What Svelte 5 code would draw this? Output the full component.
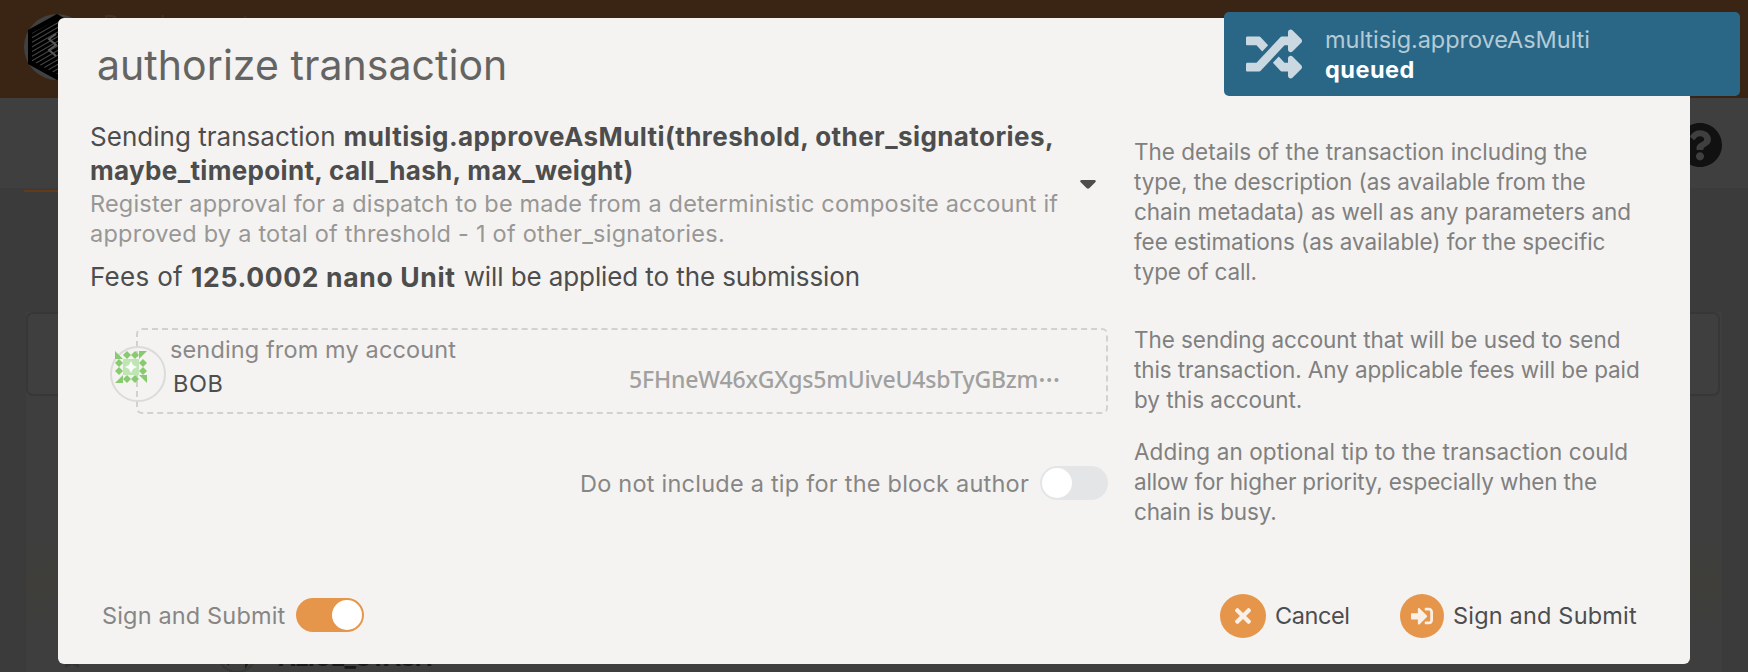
<script>
  let tipIncluded = $state(false);
  let signAndSubmit = $state(true);

  const help = [
    [
      ['The details of the transaction including the', 0],
      ['type, the description (as available from the', -0.06],
      ['chain metadata) as well as any parameters and', -0.06],
      ['fee estimations (as available) for the specific', -0.07],
      ['type of call.', -0.15]
    ],
    [
      ['The sending account that will be used to send', -0.06],
      ['this transaction. Any applicable fees will be paid', -0.11],
      ['by this account.', -0.04]
    ],
    [
      ['Adding an optional tip to the transaction could', 0.1],
      ['allow for higher priority, especially when the', -0.16],
      ['chain is busy.', -0.15]
    ]
  ];

  const diamonds = [[12, 4], [20, 4], [4, 12], [4, 20], [28, 12], [28, 20], [12, 28], [20, 28]];
</script>

<div class="page">
  <header class="topbar">
    <svg class="logo" viewBox="0 0 66 66">
      <defs>
        <pattern id="hatch" width="8" height="4" patternUnits="userSpaceOnUse" patternTransform="rotate(-30)">
          <rect width="8" height="1" fill="#4a4a4a" />
        </pattern>
      </defs>
      <circle cx="33" cy="33" r="33" fill="#414141" />
      <path d="M33 0 62 16V50L33 66 4 50V16Z" fill="#000" />
      <path d="M33 6 58 19V47L33 60 8 47V19Z" fill="url(#hatch)" />
      <path d="M32 20 25 25 32 31 25 36 32 42" fill="none" stroke="#5a5a5a" stroke-width="2" />
    </svg>
    <span class="chain">Development</span>
  </header>
  <nav class="tabs">
    <svg class="question" viewBox="8 8 496 496"><path d="M504 256c0 136.997-111.043 248-248 248S8 392.997 8 256C8 119.083 119.043 8 256 8s248 111.083 248 248zM262.655 90c-54.497 0-89.255 22.957-116.549 63.758-3.536 5.286-2.353 12.415 2.715 16.258l34.699 26.31c5.205 3.947 12.621 3.008 16.665-2.122 17.864-22.658 30.113-35.797 57.303-35.797 20.429 0 45.698 13.148 45.698 32.958 0 14.976-12.363 22.667-32.534 33.976C247.128 238.528 216 254.941 216 296v4c0 6.627 5.373 12 12 12h56c6.627 0 12-5.373 12-12v-1.333c0-28.462 83.186-29.647 83.186-106.667 0-58.002-60.165-102-116.531-102zM256 338c-25.365 0-46 20.635-46 46 0 25.364 20.635 46 46 46s46-20.636 46-46c0-25.365-20.635-46-46-46z" /></svg>
  </nav>
  <div class="underline"></div>
  <section class="panel">
    <div class="filter"></div>
    <div class="tint"></div>
    <div class="row">
      <svg class="mark" viewBox="0 0 14 18"><path d="M0 0H14V18L7 14.500 0 18Z" /></svg>
      <svg class="avatar" viewBox="0 0 40 40">
        <circle cx="20" cy="20" r="19" fill="none" stroke="#353535" stroke-width="2" />
        <path d="M5 26H12V33ZM28 26H35L28 36Z" fill="#10260c" />
      </svg>
      <b>ALICE_STASH</b>
    </div>
  </section>
</div>

<main class="modal">
  <h1>authorize transaction</h1>
  <div class="grid">
    <div class="left">
      <div class="call">
        <div class="line"><span style:letter-spacing="0.02px">Sending transaction</span><b style:letter-spacing="0.42px">multisig.approveAsMulti(threshold, other_signatories,</b></div>
        <div class="line"><b style:letter-spacing="0.34px">maybe_timepoint, call_hash, max_weight)</b></div>
        <div class="desc">Register approval for a dispatch to be made from a deterministic composite account if</div>
        <div class="desc">approved by a total of threshold - 1 of other_signatories.</div>
        <svg class="caret" viewBox="0 0 16 9"><path d="M1.500 0H14.500Q17 .5 15 2.500L9.500 8Q8 9.500 6.500 8L1 2.500Q-1 .5 1.500 0Z" /></svg>
      </div>
      <div class="line fees"><span style:letter-spacing="0.3px">Fees of</span><b class="fee">125.0002 nano Unit</b><span style:letter-spacing="-0.1px">will be applied to the submission</span></div>

      <div class="account">
        <svg class="ident" viewBox="0 0 56 56">
          <circle cx="28" cy="28" r="27" fill="none" stroke="#dbdbda" stroke-width="2" />
          <g transform="translate(5 5)" fill="#87ca70">
            <path d="M0 0V8H8ZM24 0H32L24 8ZM0 32 8 24V32ZM24 24H32V32Z" />
            {#each diamonds as [x, y]}
              <path d="M{x} {y - 4}L{x + 4} {y}L{x} {y + 4}L{x - 4} {y}Z" />
            {/each}
            <rect x="8" y="8" width="16" height="16" fill="#c0e5b5" />
            <path d="M16 10 18 14 22 16 18 18 16 22 14 18 10 16 14 14Z" fill="#fafdf9" />
          </g>
        </svg>
        <div class="who">
          <span class="label">sending from my account</span>
          <span class="name">BOB</span>
        </div>
        <div class="addr"><span>5FHneW46xGXgs5mUiveU4sbTyGBzm</span><span class="dots">…</span></div>
      </div>

      <div class="tip">
        <span>Do not include a tip for the block author</span>
        <button class="toggle" class:on={tipIncluded} aria-label="Tip" onclick={() => (tipIncluded = !tipIncluded)}></button>
      </div>
    </div>
    <aside>
      {#each help as block}
        <div class="block">
          {#each block as [text, spacing]}
            <div style:letter-spacing="{spacing}px">{text}</div>
          {/each}
        </div>
      {/each}
    </aside>
  </div>
  <footer>
    <span class="mode">Sign and Submit</span>
    <button class="toggle" class:on={signAndSubmit} aria-label="Sign" onclick={() => (signAndSubmit = !signAndSubmit)}></button>
    <button class="action cancel">
      <span class="disc wide"><svg width="16" height="16" viewBox="0 80 352 352"><path d="M242.720 256l100.070-100.070c12.280-12.280 12.280-32.190 0-44.480l-22.240-22.240c-12.280-12.280-32.190-12.280-44.480 0L176 189.280 75.930 89.210c-12.280-12.280-32.190-12.280-44.480 0L9.210 111.450c-12.280 12.280-12.280 32.190 0 44.480L109.280 256 9.210 356.070c-12.280 12.280-12.280 32.190 0 44.480l22.240 22.240c12.280 12.280 32.200 12.280 44.480 0L176 322.720l100.070 100.070c12.280 12.280 32.200 12.280 44.480 0l22.240-22.240c12.280-12.280 12.280-32.190 0-44.480L242.720 256z" /></svg></span>
      <span class="caption" style:letter-spacing="-0.4px">Cancel</span>
    </button>
    <button class="action submit">
      <span class="disc"><svg width="22" height="22" viewBox="0 0 512 512"><path d="M416 448h-84c-6.600 0-12-5.400-12-12v-40c0-6.600 5.400-12 12-12h84c17.700 0 32-14.300 32-32V160c0-17.700-14.300-32-32-32h-84c-6.600 0-12-5.400-12-12V76c0-6.600 5.400-12 12-12h84c53 0 96 43 96 96v192c0 53-43 96-96 96zm-47-201L201 79c-15-15-41-4.500-41 17v96H24c-13.300 0-24 10.700-24 24v96c0 13.300 10.700 24 24 24h136v96c0 21.500 26 32 41 17l168-168c9.300-9.400 9.300-24.600 0-34z" /></svg></span>
      <span class="caption">Sign and Submit</span>
    </button>
  </footer>
</main>

<div class="toast">
  <svg width="56" height="56" viewBox="0 0 512 512"><path d="M504.971 359.029c9.373 9.373 9.373 24.569 0 33.941l-80 79.984c-15.010 15.010-40.971 4.490-40.971-16.971V416h-58.785a12.004 12.004 0 0 1-8.773-3.812l-70.556-75.596 53.333-57.143L352 336h32v-39.981c0-21.438 25.943-31.998 40.971-16.971l80 79.981zM12 176h84l52.781 56.551 53.333-57.143-70.556-75.596A11.999 11.999 0 0 0 122.785 96H12c-6.627 0-12 5.373-12 12v56c0 6.627 5.373 12 12 12zm372 0v39.984c0 21.460 25.961 31.980 40.971 16.971l80-79.984c9.373-9.373 9.373-24.569 0-33.941l-80-79.981C409.943 24.021 384 34.582 384 56.019V96h-58.785a12.004 12.004 0 0 0-8.773 3.812L96 336H12c-6.627 0-12 5.373-12 12v56c0 6.627 5.373 12 12 12h110.785c3.326 0 6.503-1.381 8.773-3.812L352 176h32z" /></svg>
  <div class="message">
    <div class="method">multisig.approveAsMulti</div>
    <div class="status">queued</div>
  </div>
</div>

<style>
  :global(body) { margin: 0; overflow: hidden; background: #3b3b3b; }
  .page, .modal, .toast { font-family: Inter, "Noto Sans CJK JP", sans-serif; box-sizing: border-box; }
  button { font: inherit; color: inherit; border: 0; padding: 0; background: none; }
  svg { display: block; flex: none; }
  b { font-weight: 700; }

  .page { height: 672px; overflow: hidden; background: #3b3b3b; display: flex; flex-direction: column; }
  .topbar { height: 98px; flex: none; background: #3a2413; padding: 14px 24px 0; box-sizing: border-box; display: flex; gap: 13px; }
  .logo { width: 66px; height: 66px; }
  .chain { color: #44311f; font-size: 23.500px; line-height: 20px; }
  .tabs { height: 90px; flex: none; background: #3f3f3f; display: flex; align-items: center; justify-content: flex-end; padding: 4px 26px 0 0; box-sizing: border-box; }
  .question { width: 44px; height: 44px; fill: #111; }
  .underline { width: 200px; height: 2px; flex: none; margin: 2px 0 0 24px; background: #633b19; }
  .panel { margin: 120px 26px 0; flex: 1; background: #3e3e3e; display: flex; flex-direction: column; }
  .filter { height: 84px; flex: none; width: 1694px; box-sizing: border-box; border: 2px solid #373737; border-radius: 7px; background: #3f3f3f; }
  .tint { height: 77px; flex: none; margin-top: 147px; background: linear-gradient(#3e3e3d, #3f3e3b 50%, #3e3e3d); }
  .row { display: flex; align-items: flex-end; margin-top: 14px; height: 39px; padding-left: 39px; color: #181818; font-size: 24px; line-height: 30px; }
  .mark { width: 14px; height: 18px; fill: #343434; margin-bottom: 5px; }
  .avatar { width: 40px; height: 40px; margin-left: 138px; }
  .row b { margin-left: 21px; letter-spacing: -0.800px; }

  .modal { position: absolute; left: 58px; top: 18px; width: 1632px; height: 646px; border-radius: 6px; background: #f4f3f1; padding: 22px 0 26px 32px; display: flex; flex-direction: column; color: #4d4d4d; }
  h1 { margin: 0; padding-left: 7px; font-size: 41px; line-height: 50px; font-weight: 400; letter-spacing: 0.050px; color: #646463; }
  .grid { margin-top: 30px; display: grid; grid-template-columns: 1018px 1fr; column-gap: 26px; }
  .line { display: flex; gap: 8px; font-size: 26px; line-height: 34px; white-space: nowrap; }
  .call { position: relative; padding-bottom: 1px; }
  .desc { font-size: 23.500px; line-height: 30px; letter-spacing: 0.190px; color: #989796; white-space: nowrap; }
  .line + .desc { padding-top: 1px; }
  .desc + .desc { letter-spacing: 0.240px; }
  .caret { position: absolute; width: 16px; height: 9px; left: 990px; top: 60px; fill: #4d4d4d; }
  .fees { margin-top: 10px; }
  .fee { letter-spacing: 0.660px; font-size: 26.500px; }
  .account { position: relative; margin: 34px 0 0 46px; height: 86px; box-sizing: border-box; border: 2px dashed #d2d1d0; border-radius: 6px; display: flex; justify-content: space-between; padding: 0 46px 0 32px; font-size: 23.500px; white-space: nowrap; }
  .ident { position: absolute; width: 56px; height: 56px; left: -28px; top: 16px; }
  .who { display: flex; flex-direction: column; padding-top: 5px; }
  .label { line-height: 30px; letter-spacing: 0.130px; color: #8a8988; }
  .name { line-height: 38px; padding-left: 3px; letter-spacing: 0.600px; }
  .addr { display: flex; padding-top: 33px; line-height: 32px; color: #a0a09f; font-family: "Noto Sans", sans-serif; font-size: 23px; font-weight: 500; letter-spacing: -0.200px; }
  .dots { font-size: 27px; line-height: 17px; letter-spacing: 0; }
  .tip { margin-top: 52px; display: flex; align-items: center; justify-content: flex-end; gap: 11px; font-size: 23.500px; letter-spacing: 0.230px; color: #878685; }
  .toggle { position: relative; flex: none; width: 68px; height: 34px; border-radius: 17px; background: #e3e5e7; }
  .toggle::after { content: ""; position: absolute; left: 2px; top: 2px; width: 30px; height: 30px; border-radius: 50%; background: #fff; }
  .toggle.on { background: #e5964a; }
  .toggle.on::after { left: 36px; }
  aside { padding-top: 17px; font-size: 22.500px; line-height: 30px; color: #80807f; white-space: nowrap; }
  .block + .block { margin-top: 38px; }
  .block + .block + .block { margin-top: 22px; }
  footer { margin-top: auto; display: flex; align-items: center; font-size: 23.500px; height: 44px; white-space: nowrap; }
  footer .toggle { margin-bottom: 2px; }
  .mode { margin-left: 12px; width: 194px; flex: none; color: #878685; letter-spacing: 0.150px; padding-bottom: 2px; }
  .caption { padding-bottom: 2px; letter-spacing: 0.180px; }
  .action { display: flex; align-items: center; gap: 9px; }
  .cancel { margin-left: 856px; width: 180px; }
  .disc { display: flex; align-items: center; justify-content: center; width: 44px; height: 44px; border-radius: 50%; background: #e5964a; }
  .disc.wide { width: 46px; }
  .disc svg { fill: #fbf0e5; }

  .toast { position: absolute; left: 1224px; top: 12px; width: 516px; height: 84px; border-radius: 5px; background: #2a6787; display: flex; align-items: center; gap: 23px; padding-left: 22px; font-size: 23.500px; line-height: 30px; }
  .toast svg { fill: #cad9e1; }
  .message { padding-top: 2px; }
  .method { color: #b3cbd6; letter-spacing: -0.050px; }
  .status { color: #fff; font-weight: 700; letter-spacing: 0.500px; }
</style>
